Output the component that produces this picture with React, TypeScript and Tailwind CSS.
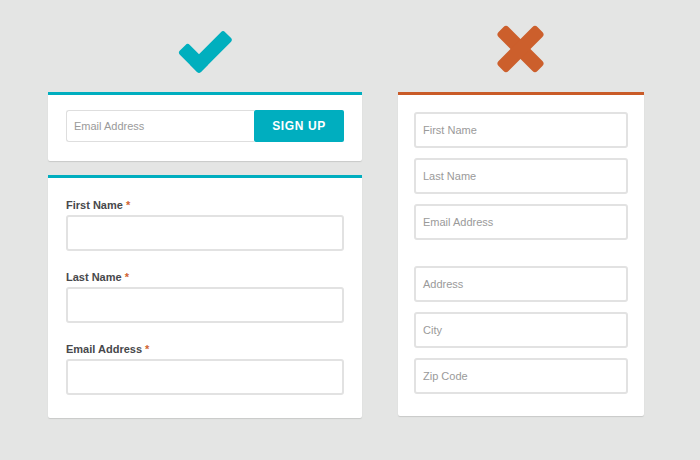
import React from "react";

const font = { fontFamily: '"Liberation Sans", Arial, sans-serif' };

function Label({ text }: { text: string }) {
  return (
    <div className="h-[14px] text-[11px] leading-[14px] font-bold text-[#47484b] mb-[3px]">
      {text} <span className="text-[#d0632f]">*</span>
    </div>
  );
}

function Field({ placeholder }: { placeholder?: string }) {
  return (
    <div className="h-[36px] rounded-[3px] border-2 border-[#e2e2e2] bg-white flex items-center pl-[7px] text-[11px] text-[#9a9a9a]">
      {placeholder}
    </div>
  );
}

export default function App() {
  return (
    <div className="w-[700px] h-[460px] bg-[#e4e5e4] flex pl-[48px] gap-[36px]" style={font}>
      {/* Left column */}
      <div className="w-[314px] flex flex-col">
        <svg width="314" height="92" viewBox="48 0 314 92">
          <g transform="translate(199 64) rotate(-45)">
            <rect x="-7" y="-7" width="48" height="14" rx="3" fill="#00afbe" />
          </g>
          <g transform="translate(199 64) rotate(-135)">
            <rect x="-7" y="-7" width="30" height="14" rx="3" fill="#00afbe" />
          </g>
        </svg>
        <div className="bg-white border-t-[3px] border-[#00aebf] rounded-b-[2px] shadow-[0_1px_1px_rgba(0,0,0,0.12)] px-[18px] pt-[15px] pb-[19px] flex">
          <div className="flex-1 h-[32px] border border-[#dedede] border-r-0 rounded-l-[3px] flex items-center pl-[7px] text-[11px] text-[#9a9a9a]">
            Email Address
          </div>
          <div className="w-[90px] h-[32px] bg-[#00aebf] rounded-[2px] flex items-center justify-center text-white text-[12px] font-bold tracking-[0.6px]">
            SIGN UP
          </div>
        </div>
        <div className="mt-[14px] bg-white border-t-[3px] border-[#00aebf] rounded-b-[2px] shadow-[0_1px_1px_rgba(0,0,0,0.12)] px-[18px] pt-[20px] pb-[23px] flex flex-col gap-[19px]">
          <div>
            <Label text="First Name" />
            <Field />
          </div>
          <div>
            <Label text="Last Name" />
            <Field />
          </div>
          <div>
            <Label text="Email Address" />
            <Field />
          </div>
        </div>
      </div>

      {/* Right column */}
      <div className="w-[246px] flex flex-col">
        <svg width="246" height="92" viewBox="398 0 246 92">
          <g transform="translate(520.5 49) rotate(45)">
            <rect x="-27.5" y="-7" width="55" height="14" rx="3.5" fill="#cc5f2c" />
          </g>
          <g transform="translate(520.5 49) rotate(-45)">
            <rect x="-27.5" y="-7" width="55" height="14" rx="3.5" fill="#cc5f2c" />
          </g>
        </svg>
        <div className="bg-white border-t-[3px] border-[#c95b28] rounded-b-[2px] shadow-[0_1px_1px_rgba(0,0,0,0.12)] px-[16px] pt-[17px] pb-[22px] flex flex-col">
          <div className="flex flex-col gap-[10px]">
            <Field placeholder="First Name" />
            <Field placeholder="Last Name" />
            <Field placeholder="Email Address" />
          </div>
          <div className="flex flex-col gap-[10px] mt-[26px]">
            <Field placeholder="Address" />
            <Field placeholder="City" />
            <Field placeholder="Zip Code" />
          </div>
        </div>
      </div>
    </div>
  );
}
